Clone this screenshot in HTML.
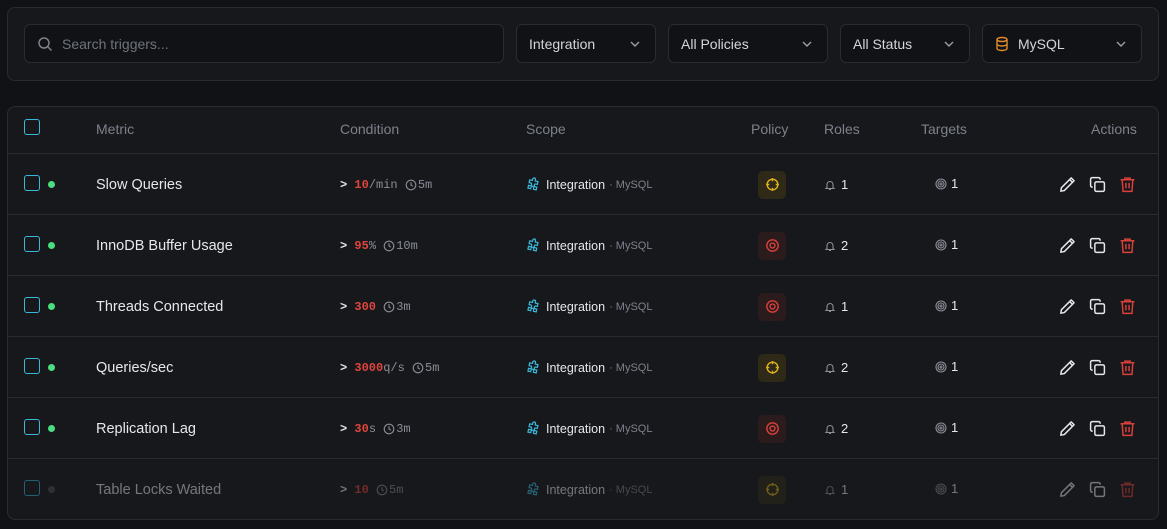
<!DOCTYPE html>
<html><head><meta charset="utf-8"><style>
*{box-sizing:border-box;margin:0;padding:0}
body{width:1167px;height:529px;background:#111216;font-family:"Liberation Sans",sans-serif;color:#e5e7eb;position:relative;overflow:hidden}
.card{position:absolute;left:7px;right:8px;background:#17181c;border:1px solid #2a2b31;border-radius:8px}
.inp{position:absolute;top:24px;height:39px;background:#111216;border:1px solid #2a2b31;border-radius:6px;font-size:14px;color:#d4d6db;display:flex;align-items:center;padding-left:12px}
.inp .chev{position:absolute;right:14px;top:14px}
.hdr{position:absolute;top:121px;font-size:14px;color:#7d818b}
.row{position:absolute;left:7px;right:8px;height:61px;border-top:1px solid #2a2b31}
.cell{position:absolute;top:1px;height:61px;display:flex;align-items:center;font-size:14px}
.cb{width:16px;height:16px;border:1.5px solid #3bb7d8;border-radius:3px}
.mono{font-family:"Liberation Mono",monospace;font-size:12px}
.pol{width:28px;height:28px;border-radius:5px;display:flex;align-items:center;justify-content:center}
.dim{opacity:.45}
</style></head><body>
<div class="card" style="top:7px;height:74px"></div>
<div class="inp" style="left:24px;width:480px;color:#6f737c">
<svg width="16" height="16" viewBox="0 0 16 16" fill="none" stroke="#7d818b" stroke-width="1.5" style="margin-right:9px"><circle cx="7" cy="7" r="5"/><path d="M11 11l3.5 3.5"/></svg>Search triggers...</div>
<div class="inp" style="left:516px;width:140px">Integration<svg class="chev" width="12" height="10" viewBox="0 0 12 10" fill="none" stroke="#9a9ea6" stroke-width="1.4"><path d="M2 3l4 4 4-4"/></svg></div>
<div class="inp" style="left:668px;width:160px">All Policies<svg class="chev" width="12" height="10" viewBox="0 0 12 10" fill="none" stroke="#9a9ea6" stroke-width="1.4"><path d="M2 3l4 4 4-4"/></svg></div>
<div class="inp" style="left:840px;width:130px">All Status<svg class="chev" width="12" height="10" viewBox="0 0 12 10" fill="none" stroke="#9a9ea6" stroke-width="1.4"><path d="M2 3l4 4 4-4"/></svg></div>
<div class="inp" style="left:982px;width:160px"><svg width="14" height="16" viewBox="0 0 14 16" fill="none" stroke="#e08a2c" stroke-width="1.4" style="margin-right:9px"><ellipse cx="7" cy="3.5" rx="5" ry="2"/><path d="M2 3.5v9c0 1.1 2.2 2 5 2s5-.9 5-2v-9M2 8c0 1.1 2.2 2 5 2s5-.9 5-2"/></svg>MySQL<svg class="chev" width="12" height="10" viewBox="0 0 12 10" fill="none" stroke="#9a9ea6" stroke-width="1.4"><path d="M2 3l4 4 4-4"/></svg></div>

<div class="card" style="top:106px;height:414px"></div>
<div class="cb" style="position:absolute;left:24px;top:119px"></div>
<div class="hdr" style="left:96px">Metric</div>
<div class="hdr" style="left:340px">Condition</div>
<div class="hdr" style="left:526px">Scope</div>
<div class="hdr" style="left:751px">Policy</div>
<div class="hdr" style="left:824px">Roles</div>
<div class="hdr" style="left:921px">Targets</div>
<div class="hdr" style="left:1091px">Actions</div>

<svg width="0" height="0" style="position:absolute"><defs>
<symbol id="puz" viewBox="0 0 16 16"><path d="M6 2.5a1.5 1.5 0 013 0V4h3v3h-1.5a1.5 1.5 0 000 3H12v3H9v-1.5a1.5 1.5 0 00-3 0V13H3v-3h1.5a1.5 1.5 0 000-3H3V4h3z" fill="none" stroke="#3bb7d8" stroke-width="1.3" transform="rotate(12 8 8)"/></symbol>
<symbol id="bell" viewBox="0 0 12 12"><path d="M3 8.5V5.5a3 3 0 016 0v3l1 1H2zM5 10.5h2" fill="none" stroke="#8a8e97" stroke-width="1.1"/></symbol>
<symbol id="tgt" viewBox="0 0 12 12"><g fill="none" stroke="#8a8e97" stroke-width="1.1"><circle cx="6" cy="6" r="5"/><circle cx="6" cy="6" r="3"/><circle cx="6" cy="6" r="1"/></g></symbol>
<symbol id="cross" viewBox="0 0 14 14"><g fill="none" stroke="#e0b020" stroke-width="1.3"><circle cx="7" cy="7" r="5"/><path d="M7 1v3M7 10v3M1 7h3M10 7h3"/></g></symbol>
<symbol id="ring" viewBox="0 0 14 14"><g fill="none" stroke="#d9403a" stroke-width="1.3"><circle cx="7" cy="7" r="5.3"/><circle cx="7" cy="7" r="2.3"/></g></symbol>
<symbol id="clk" viewBox="0 0 12 12"><g fill="none" stroke="#8a8e97" stroke-width="1.1"><circle cx="6" cy="6" r="4.8"/><path d="M6 3.3V6l1.8 1.2"/></g></symbol>
<symbol id="pen" viewBox="0 0 16 16"><path d="M11.5 1.8l2.7 2.7L5 13.7l-3.3.6.6-3.3z M10 3.3l2.7 2.7" fill="none" stroke="#e5e7eb" stroke-width="1.4" stroke-linejoin="round"/></symbol>
<symbol id="cp" viewBox="0 0 16 16"><g fill="none" stroke="#e5e7eb" stroke-width="1.4"><rect x="5.5" y="5.5" width="9" height="9" rx="1.5"/><path d="M3.5 10.5h-.5a1.5 1.5 0 01-1.5-1.5V3a1.5 1.5 0 011.5-1.5h6A1.5 1.5 0 0110.5 3v.5"/></g></symbol>
<symbol id="tr" viewBox="0 0 16 16"><g fill="none" stroke="#d9403a" stroke-width="1.4"><path d="M1.5 3.5h13M5.5 3.5V2h5v1.5M3 3.5l.8 11h8.4l.8-11M6.5 6.5v5M9.5 6.5v5"/></g></symbol>
</defs></svg>

<div id="rows"></div>
<script>
const data=[
["Slow Queries","10","/min","5m","cross","1",1],
["InnoDB Buffer Usage","95","%","10m","ring","2",1],
["Threads Connected","300","","3m","ring","1",1],
["Queries/sec","3000","q/s","5m","cross","2",1],
["Replication Lag","30","s","3m","ring","2",1],
["Table Locks Waited","10","","5m","cross","1",0]];
let h="";
data.forEach((d,i)=>{const top=153+i*61;const on=d[6];
h+=`<div class="row" style="top:${top}px"></div><div style="position:absolute;left:0;top:${top}px;width:1167px;height:61px" class="${on?'':'dim'}">
<div class="cell" style="left:24px;top:-1px"><div class="cb"></div></div>
<div class="cell" style="left:48px"><div style="width:7px;height:7px;border-radius:50%;background:${on?'#4ade80':'#4a4d55'}"></div></div>
<div class="cell" style="left:96px;font-size:14.5px;color:#e5e7eb">${d[0]}</div>
<div class="cell mono" style="left:340px;color:#e5e7eb"><b style="font-weight:bold">&gt;</b>&nbsp;<b style="color:#e0453c">${d[1]}</b><span style="color:#8a8e97">${d[2]}</span>&nbsp;<svg width="12" height="12" style="margin-right:1px"><use href="#clk"/></svg><span style="color:#8a8e97">${d[3]}</span></div>
<div class="cell" style="left:526px;font-size:12.5px"><svg width="15" height="15" style="margin-right:5px"><use href="#puz"/></svg>Integration<span style="color:#7d818b;font-size:11px;margin-left:4px">· MySQL</span></div>
<div class="cell" style="left:758px"><div class="pol" style="background:${d[4]=='cross'?'#2e2a17':'#2c1b1d'}"><svg width="15" height="15"><use href="#${d[4]}"/></svg></div></div>
<div class="cell" style="left:824px;font-size:13px"><svg width="12" height="12" style="margin-right:5px"><use href="#bell"/></svg>${d[5]}</div>
<div class="cell" style="left:935px;font-size:13px;top:0"><svg width="12" height="12" style="margin-right:4px"><use href="#tgt"/></svg>1</div>
<div class="cell" style="left:1059px"><svg width="17" height="17"><use href="#pen"/></svg></div>
<div class="cell" style="left:1089px"><svg width="17" height="17"><use href="#cp"/></svg></div>
<div class="cell" style="left:1119px"><svg width="17" height="17"><use href="#tr"/></svg></div>
</div>`});
document.getElementById("rows").innerHTML=h;
</script>
</body></html>
